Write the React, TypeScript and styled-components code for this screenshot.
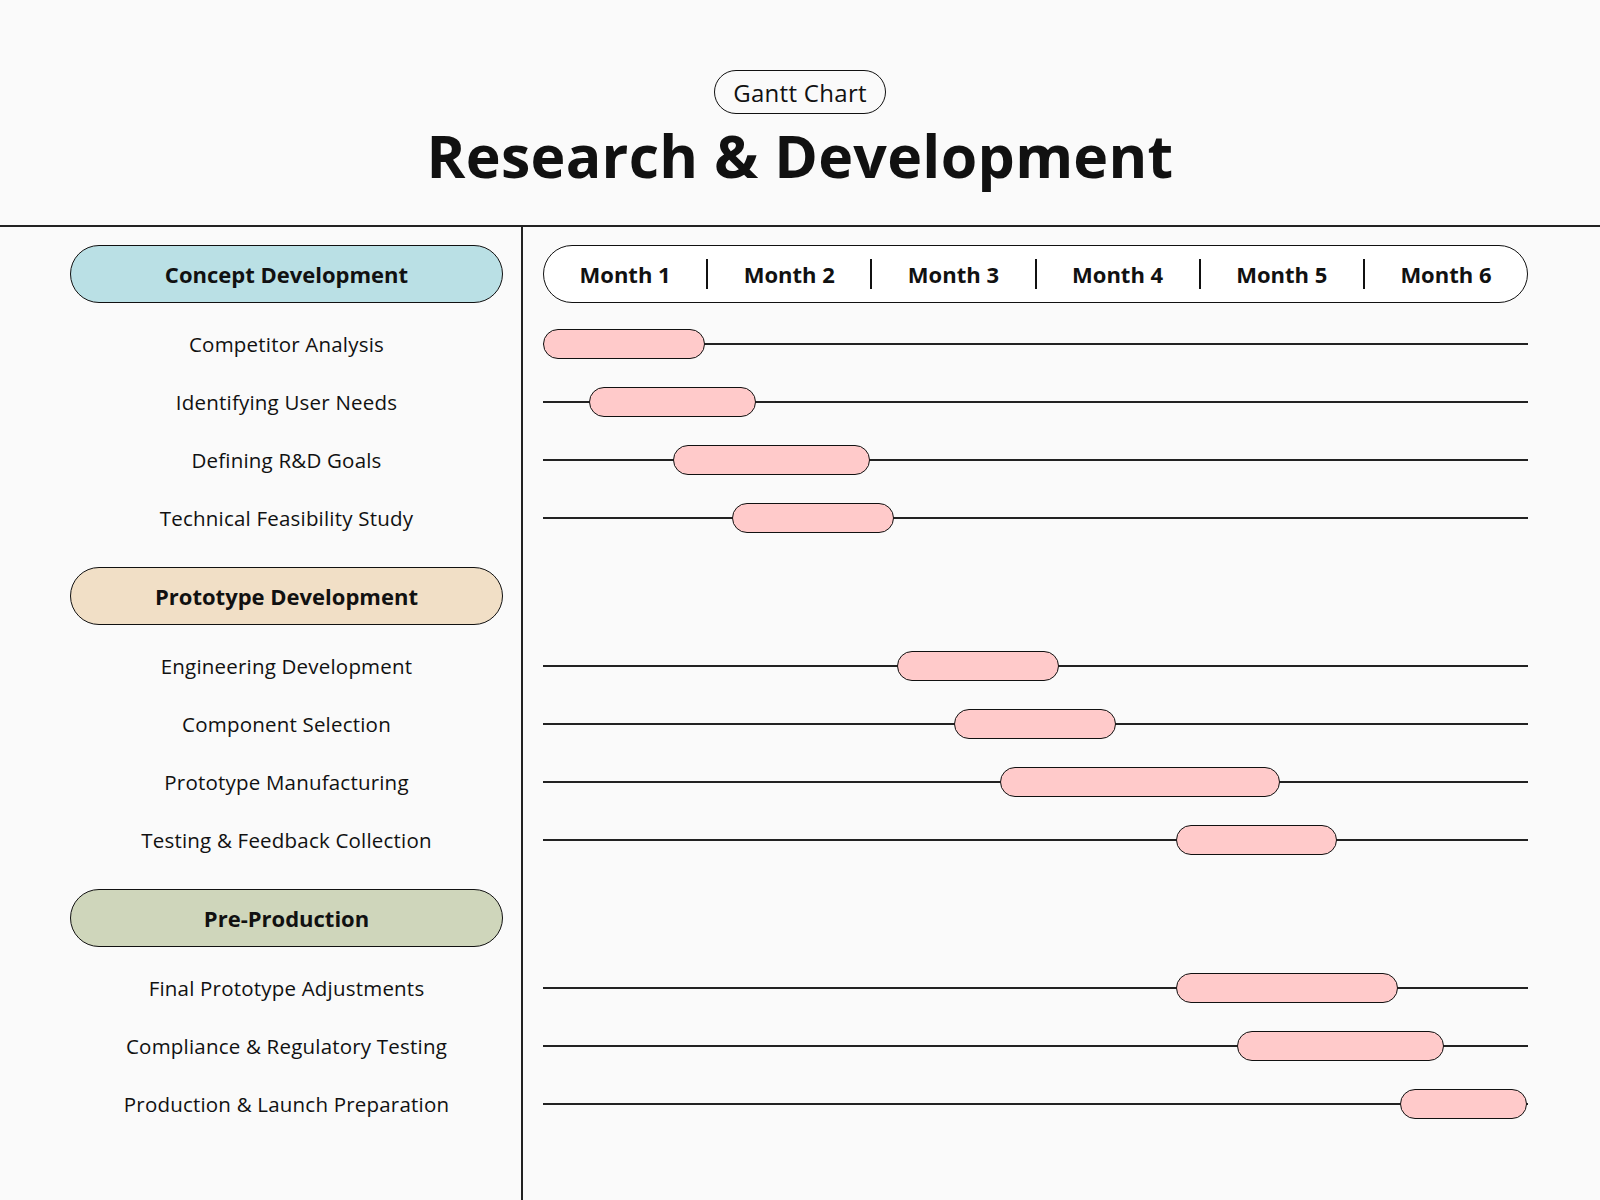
import React from "react";
import styled, { createGlobalStyle } from "styled-components";

const G = createGlobalStyle`
  body { margin: 0; background: #fafafa; font-family: "Open Sans", "Noto Sans", sans-serif; color: #111; }
`;
const Page = styled.div`width: 1600px; height: 1200px; background: #fafafa; display: flex; flex-direction: column;`;
const Header = styled.header`height: 227px; border-bottom: 2px solid #222; display: flex; flex-direction: column; align-items: center; padding-top: 70px; box-sizing: border-box;`;
const Badge = styled.div`border: 1.5px solid #111; border-radius: 22px; padding: 0 18px; height: 42px; display: flex; align-items: center; font-size: 24px; letter-spacing: 0.3px;`;
const Title = styled.h1`margin: 3px 0 0; font-size: 59px; font-weight: 700; line-height: 76px; letter-spacing: 0.3px;`;
const Body = styled.div`flex: 1; display: flex;`;
const Left = styled.div`width: 523px; border-right: 2px solid #222; padding: 18px 0 0 70px; box-sizing: border-box; display: flex; flex-direction: column;`;
const Right = styled.div`flex: 1; padding: 18px 0 0 20px; display: flex; flex-direction: column;`;
const Pill = styled.div<{ $bg: string }>`width: 433px; height: 58px; margin-bottom: 12px; box-sizing: border-box; border: 1.5px solid #111; border-radius: 29px; background: ${p => p.$bg}; display: flex; align-items: center; justify-content: center; font-size: 22px; font-weight: 700;`;
const Label = styled.div`width: 433px; height: 58px; display: flex; align-items: center; justify-content: center; font-size: 20.5px; letter-spacing: 0.2px;`;
const Spacer = styled.div`height: 20px;`;
const Months = styled.div`width: 985px; height: 58px; margin-bottom: 12px; box-sizing: border-box; border: 1.5px solid #111; border-radius: 29px; background: #fff; display: flex; align-items: center;`;
const HeadGap = styled.div`height: 70px;`;
const Month = styled.div<{ $first: boolean }>`flex: 1; text-align: center; font-size: 22px; font-weight: 700; border-left: ${p => (p.$first ? "none" : "2px solid #111")}; line-height: 30px;`;
const Track = styled.div`width: 985px; height: 58px; display: flex; align-items: center; position: relative;`;
const Line = styled.div`position: absolute; left: 0; right: 0; top: 28px; height: 2px; background: #222;`;
const Bar = styled.div`position: absolute; top: 14px; height: 30px; box-sizing: border-box; border: 1.5px solid #111; border-radius: 15px; background: #ffcaca;`;

type Sec = { name: string; bg: string; tasks: [string, number, number][] };
const secs: Sec[] = [
  { name: "Concept Development", bg: "#bae0e5", tasks: [
    ["Competitor Analysis", 544, 706], ["Identifying User Needs", 590, 757],
    ["Defining R&D Goals", 674, 871], ["Technical Feasibility Study", 733, 895]] },
  { name: "Prototype Development", bg: "#f1dfc6", tasks: [
    ["Engineering Development", 898, 1060], ["Component Selection", 955, 1117],
    ["Prototype Manufacturing", 1001, 1281], ["Testing & Feedback Collection", 1177, 1338]] },
  { name: "Pre-Production", bg: "#cfd6bb", tasks: [
    ["Final Prototype Adjustments", 1177, 1399], ["Compliance & Regulatory Testing", 1238, 1445],
    ["Production & Launch Preparation", 1401, 1528]] },
];

export default function App() {
  return (
    <Page>
      <G />
      <Header>
        <Badge>Gantt Chart</Badge>
        <Title>Research &amp; Development</Title>
      </Header>
      <Body>
        <Left>
          {secs.map((s, i) => (
            <React.Fragment key={s.name}>
              {i > 0 && <Spacer />}
              <Pill $bg={s.bg}>{s.name}</Pill>
              {s.tasks.map(t => <Label key={t[0]}>{t[0]}</Label>)}
            </React.Fragment>
          ))}
        </Left>
        <Right>
          {secs.map((s, i) => (
            <React.Fragment key={s.name}>
              {i > 0 && <Spacer />}
              {i === 0 ? (
                <Months>
                  {[1, 2, 3, 4, 5, 6].map(m => <Month key={m} $first={m === 1}>Month {m}</Month>)}
                </Months>
              ) : <HeadGap />}
              {s.tasks.map(t => (
                <Track key={t[0]}>
                  <Line />
                  <Bar style={{ left: t[1] - 544, width: t[2] - t[1] }} />
                </Track>
              ))}
            </React.Fragment>
          ))}
        </Right>
      </Body>
    </Page>
  );
}
